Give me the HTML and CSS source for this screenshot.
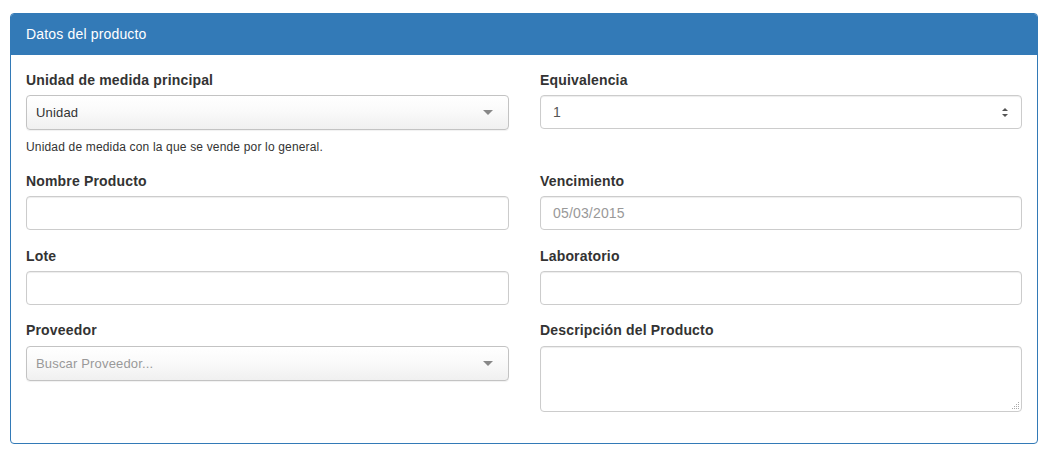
FILE: index.html
```html
<!DOCTYPE html>
<html lang="es">
<head>
<meta charset="utf-8">
<link rel="stylesheet" href="styles.css">
<title>Datos del producto</title>
</head>
<body>
<div class="panel">
  <div class="panel-heading">Datos del producto</div>
  <div class="panel-body">
    <div class="row r1">
      <div class="col">
        <div class="form-group">
          <label class="lbl">Unidad de medida principal</label>
          <div class="chosen"><span class="chosen-text">Unidad</span><span class="caret"></span></div>
          <p class="help">Unidad de medida con la que se vende por lo general.</p>
        </div>
      </div>
      <div class="col">
        <div class="form-group">
          <label class="lbl">Equivalencia</label>
          <div class="control number"><span>1</span>
            <svg class="spin" width="8" height="12" viewBox="0 0 8 12"><path d="M1 5 L4 2 L7 5 Z" fill="#555"/><path d="M1 8 L4 11 L7 8 Z" fill="#555"/></svg>
          </div>
        </div>
      </div>
    </div>
    <div class="row r2">
      <div class="col">
        <div class="form-group">
          <label class="lbl">Nombre Producto</label>
          <div class="control"></div>
        </div>
      </div>
      <div class="col">
        <div class="form-group">
          <label class="lbl">Vencimiento</label>
          <div class="control placeholder">05/03/2015</div>
        </div>
      </div>
    </div>
    <div class="row r3">
      <div class="col">
        <div class="form-group">
          <label class="lbl">Lote</label>
          <div class="control"></div>
        </div>
      </div>
      <div class="col">
        <div class="form-group">
          <label class="lbl">Laboratorio</label>
          <div class="control"></div>
        </div>
      </div>
    </div>
    <div class="row r4">
      <div class="col">
        <div class="form-group">
          <label class="lbl">Proveedor</label>
          <div class="chosen"><span class="chosen-text placeholder-text">Buscar Proveedor...</span><span class="caret"></span></div>
        </div>
      </div>
      <div class="col">
        <div class="form-group">
          <label class="lbl">Descripción del Producto</label>
          <div class="area-wrap">
            <textarea class="control area"></textarea>
            <svg class="grip" width="9" height="9" viewBox="0 0 9 9">
              <g fill="#aaa">
                <rect x="7" y="1" width="1" height="1"/>
                <rect x="5" y="3" width="1" height="1"/><rect x="7" y="3" width="1" height="1"/>
                <rect x="3" y="5" width="1" height="1"/><rect x="5" y="5" width="1" height="1"/><rect x="7" y="5" width="1" height="1"/>
                <rect x="1" y="7" width="1" height="1"/><rect x="3" y="7" width="1" height="1"/><rect x="5" y="7" width="1" height="1"/><rect x="7" y="7" width="1" height="1"/>
              </g>
            </svg>
          </div>
        </div>
      </div>
    </div>
  </div>
</div>
</body>
</html>
```

FILE: styles.css
```css
* { box-sizing: border-box; }
html, body { margin: 0; padding: 0; background: #fff; }
body {
  font-family: "Liberation Sans", Arial, sans-serif;
  font-size: 14px;
  line-height: 20px;
  letter-spacing: 0.012em;
  color: #333;
  padding: 13px 17px 0 10px;
}
.panel {
  border: 1px solid #337ab7;
  border-radius: 4px;
  background: #fff;
}
.panel-heading {
  background: #337ab7;
  color: #fff;
  height: 41px;
  padding: 10px 15px 0 15px;
  font-size: 14px;
  line-height: 20px;
  border-radius: 3px 3px 0 0;
}
.panel-body { padding: 15px 15px 16px 15px; }
.row { display: flex; margin: 0 -15px; }
.col { width: 50%; padding: 0 15px; }
.col + .col { padding-left: 16px; }
.form-group { margin-bottom: 15px; }
.r1 .form-group { margin-bottom: 14px; }
.r2 .form-group { margin-bottom: 16px; }
.r3 .form-group { margin-bottom: 15px; }
.lbl {
  display: block;
  font-weight: bold;
  margin-bottom: 5px;
  height: 20px;
}
.r4 .lbl { margin-bottom: 6px; }
.control {
  display: flex;
  align-items: center;
  width: 100%;
  height: 34px;
  padding: 6px 12px;
  border: 1px solid #ccc;
  border-radius: 4px;
  background: #fff;
  box-shadow: inset 0 1px 1px rgba(0,0,0,.075);
  font-family: inherit;
  font-size: 14px;
  color: #555;
}
.placeholder { color: #999; }
.number { justify-content: space-between; padding-right: 12px; }
.spin { display: block; }
.area-wrap { position: relative; }
.area {
  height: 66px;
  display: block;
  resize: none;
  margin: 0;
}
.grip { position: absolute; right: 2px; bottom: 2px; }
.chosen {
  display: flex;
  align-items: center;
  justify-content: space-between;
  height: 35px;
  padding: 0 15px 0 8px;
  border: 1px solid #c3c3c3;
  border-radius: 4px;
  background: linear-gradient(#ffffff 0%, #fafafa 45%, #f0f0f0 100%);
  box-shadow: 0 1px 1px rgba(0,0,0,.06);
  font-size: 13px;
  color: #333;
}
.chosen-text { padding-left: 1px; }
.placeholder-text { color: #999; }
.caret {
  width: 0;
  height: 0;
  border-left: 5px solid transparent;
  border-right: 5px solid transparent;
  border-top: 5px solid #888;
}
.help {
  margin: 7px 0 0 0;
  font-size: 12px;
  line-height: 20px;
  color: #333;
}
```
